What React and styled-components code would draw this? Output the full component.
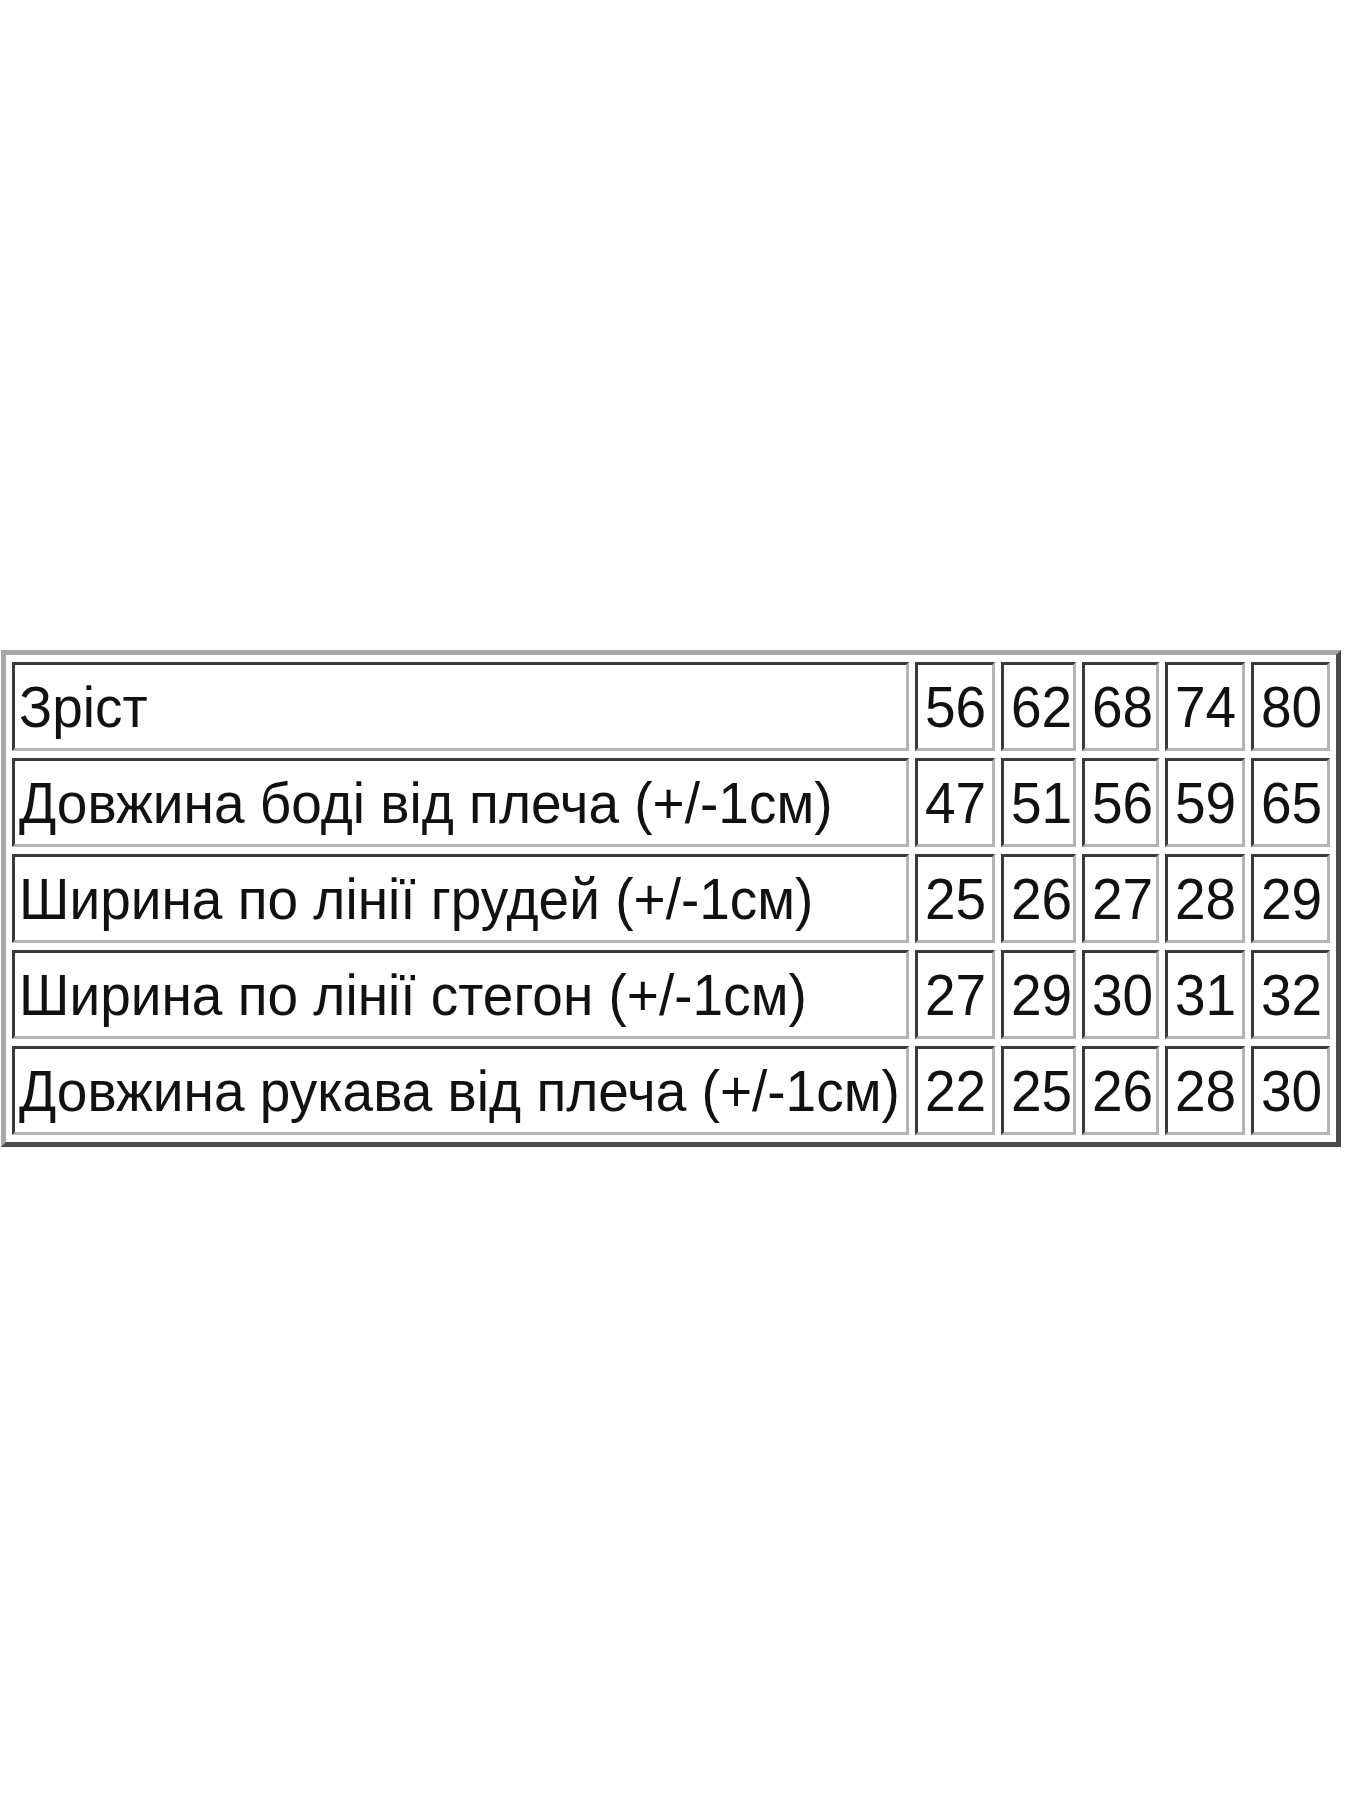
import React from "react";
import styled, { createGlobalStyle } from "styled-components";

const Global = createGlobalStyle`
  html, body {
    margin: 0;
    padding: 0;
    background: #ffffff;
  }
  body {
    font-family: "Liberation Sans", Arial, sans-serif;
  }
`;

const sizes = [56, 62, 68, 74, 80];

const rows = [
  { label: "Довжина боді від плеча (+/-1см)", values: [47, 51, 56, 59, 65] },
  { label: "Ширина по лінії грудей (+/-1см)", values: [25, 26, 27, 28, 29] },
  { label: "Ширина по лінії стегон (+/-1см)", values: [27, 29, 30, 31, 32] },
  { label: "Довжина рукава від плеча (+/-1см)", values: [22, 25, 26, 28, 30] },
];

const colWidths = [897, 80, 75, 77, 80, 79];

const Page = styled.div`
  height: 1800px;
  padding-top: 650px;
  padding-left: 1px;
  box-sizing: border-box;
`;

const Table = styled.table`
  width: 1340px;
  table-layout: fixed;
  border-collapse: separate;
  border-spacing: 6px 7px;
  border-style: solid;
  border-width: 5px;
  border-color: #a8a8a8 #4a4a4a #4a4a4a #a8a8a8;
  box-sizing: border-box;
`;

const Cell = styled.td`
  height: 89px;
  box-sizing: border-box;
  padding: 0 0 0 ${(p) => (p.$label ? "4px" : "7px")};
  border-style: solid;
  border-width: 3px;
  border-color: #3a3a3a #b4b4b4 #b4b4b4 #3a3a3a;
  color: #111;
  font-size: 55px;
  white-space: nowrap;
  overflow: hidden;
  vertical-align: middle;
  text-align: left;
`;

const Txt = styled.span`
  display: inline-block;
  transform: scaleY(1.06);
  transform-origin: center;
  line-height: 1;
`;

export default function App() {
  return (
    <>
      <Global />
      <Page>
        <Table>
          <colgroup>
            {colWidths.map((w, i) => (
              <col key={i} style={{ width: w }} />
            ))}
          </colgroup>
          <tbody>
            <tr>
              <Cell $label>
                <Txt>Зріст</Txt>
              </Cell>
              {sizes.map((s) => (
                <Cell key={s}>
                  <Txt>{s}</Txt>
                </Cell>
              ))}
            </tr>
            {rows.map((r) => (
              <tr key={r.label}>
                <Cell $label>
                  <Txt>{r.label}</Txt>
                </Cell>
                {r.values.map((v, i) => (
                  <Cell key={i}>
                    <Txt>{v}</Txt>
                  </Cell>
                ))}
              </tr>
            ))}
          </tbody>
        </Table>
      </Page>
    </>
  );
}
